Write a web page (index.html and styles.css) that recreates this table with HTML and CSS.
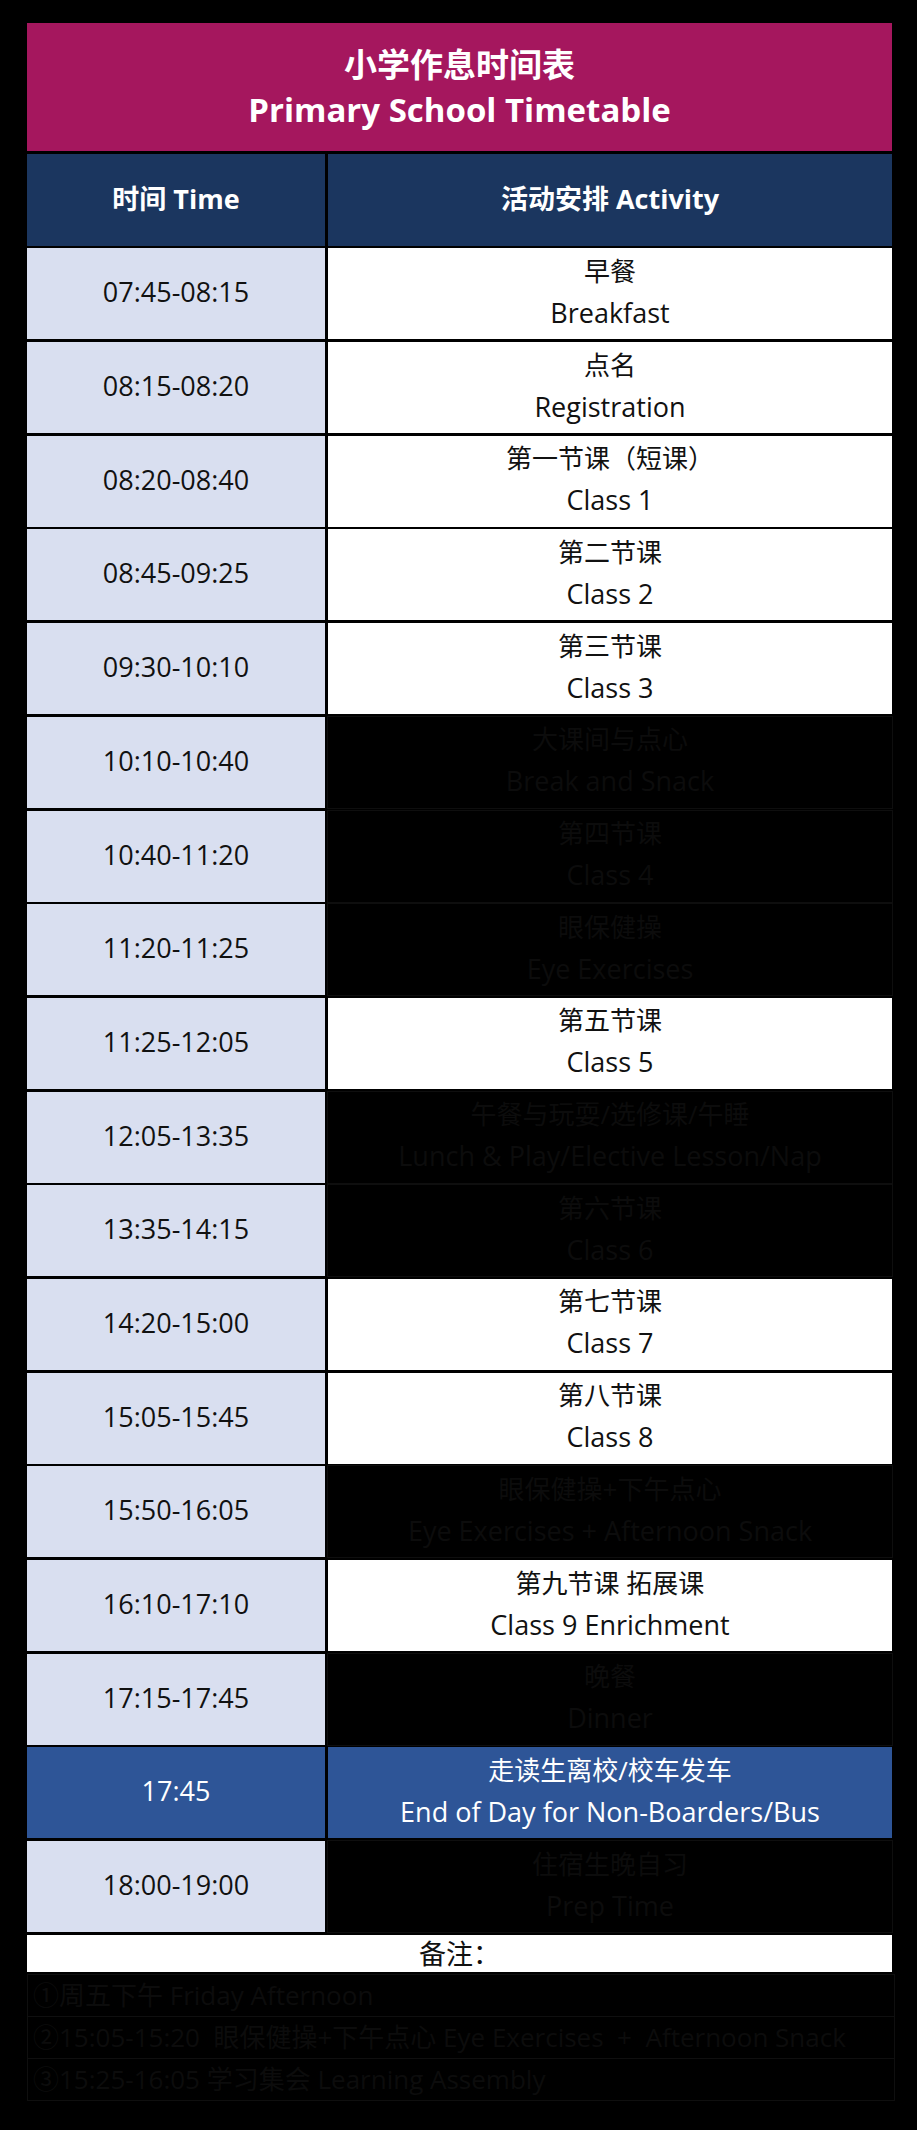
FILE: index.html
```html
<!DOCTYPE html>
<html lang="zh-CN">
<head>
<meta charset="utf-8">
<title>小学作息时间表 Primary School Timetable</title>
<link rel="stylesheet" href="styles.css">
</head>
<body>
<div class="page">
  <div class="grid">
    <div class="title">
      <div>小学作息时间表</div>
      <div>Primary School Timetable</div>
    </div>
    <div class="colhead">时间 Time</div>
    <div class="colhead">活动安排 Activity</div>

    <div class="time">07:45-08:15</div><div class="act light"><span>早餐</span><span>Breakfast</span></div>
    <div class="time">08:15-08:20</div><div class="act light"><span>点名</span><span>Registration</span></div>
    <div class="time">08:20-08:40</div><div class="act light"><span>第一节课（短课）</span><span>Class 1</span></div>
    <div class="time">08:45-09:25</div><div class="act light"><span>第二节课</span><span>Class 2</span></div>
    <div class="time">09:30-10:10</div><div class="act light"><span>第三节课</span><span>Class 3</span></div>
    <div class="time">10:10-10:40</div><div class="act dark"><span>大课间与点心</span><span>Break and Snack</span></div>
    <div class="time">10:40-11:20</div><div class="act dark"><span>第四节课</span><span>Class 4</span></div>
    <div class="time">11:20-11:25</div><div class="act dark"><span>眼保健操</span><span>Eye Exercises</span></div>
    <div class="time">11:25-12:05</div><div class="act light"><span>第五节课</span><span>Class 5</span></div>
    <div class="time">12:05-13:35</div><div class="act dark"><span>午餐与玩耍/选修课/午睡</span><span>Lunch &amp; Play/Elective Lesson/Nap</span></div>
    <div class="time">13:35-14:15</div><div class="act dark"><span>第六节课</span><span>Class 6</span></div>
    <div class="time">14:20-15:00</div><div class="act light"><span>第七节课</span><span>Class 7</span></div>
    <div class="time">15:05-15:45</div><div class="act light"><span>第八节课</span><span>Class 8</span></div>
    <div class="time">15:50-16:05</div><div class="act dark"><span>眼保健操+下午点心</span><span>Eye Exercises + Afternoon Snack</span></div>
    <div class="time">16:10-17:10</div><div class="act light"><span>第九节课 拓展课</span><span>Class 9 Enrichment</span></div>
    <div class="time">17:15-17:45</div><div class="act dark"><span>晚餐</span><span>Dinner</span></div>
    <div class="time blue">17:45</div><div class="act blue"><span>走读生离校/校车发车</span><span>End of Day for Non-Boarders/Bus</span></div>
    <div class="time">18:00-19:00</div><div class="act dark"><span>住宿生晚自习</span><span>Prep Time</span></div>

    <div class="remark">备注：</div>
  </div>
  <div class="notes">
    <div class="note">①周五下午 Friday Afternoon</div>
    <div class="note">②15:05-15:20&nbsp; 眼保健操+下午点心 Eye Exercises&nbsp; +&nbsp; Afternoon Snack</div>
    <div class="note">③15:25-16:05 学习集会 Learning Assembly</div>
  </div>
</div>
</body>
</html>
```
FILE: styles.css
```css
html, body {
  margin: 0;
  padding: 0;
  background: #000;
}
body {
  font-family: "Open Sans", "Noto Sans CJK SC", sans-serif;
  color: #111;
  width: 917px;
  height: 2130px;
  overflow: hidden;
}
.page {
  padding: 23px 25px 0 27px;
}
.grid {
  display: grid;
  grid-template-columns: 298px 564px;
  grid-auto-rows: 91px;
  grid-template-rows: 128px 92px;
  column-gap: 3px;
  row-gap: 2.7px;
  width: 865px;
}
.title {
  grid-column: 1 / 3;
  background: #a5175e;
  color: #fff;
  font-weight: 700;
  font-size: 33px;
  line-height: 45px;
  display: flex;
  flex-direction: column;
  align-items: center;
  justify-content: center;
}
.colhead {
  background: #1b365f;
  color: #fff;
  font-weight: 700;
  font-size: 27px;
  display: flex;
  align-items: center;
  justify-content: center;
  padding-bottom: 4px;
}
.time {
  background: #d9dff0;
  color: #111;
  font-size: 27px;
  display: flex;
  align-items: center;
  justify-content: center;
  padding-bottom: 4px;
}
.act {
  display: flex;
  flex-direction: column;
  align-items: center;
  justify-content: center;
  font-size: 26px;
  line-height: 41px;
  padding-bottom: 4px;
}
.act span:last-child {
  font-size: 27px;
}
.light {
  background: #fff;
  color: #111;
}
.dark {
  background: #000;
  color: #0c0c0c;
  box-shadow: 0 0 0 1px #0e0e0e;
}
.blue {
  background: #2e5597;
  color: #fff;
}
.remark {
  grid-column: 1 / 3;
  height: 37px;
  background: #fff;
  color: #111;
  font-size: 27px;
  line-height: 37px;
  text-align: center;
  align-self: start;
}
.notes {
  margin-top: -52px;
  width: 866px;
  border: 1px solid #0f0f0f;
  display: flex;
  flex-direction: column;
}
.note {
  height: 41px;
  line-height: 41px;
  padding-left: 5px;
  font-size: 26px;
  color: #0c0c0c;
  border-bottom: 1px solid #0f0f0f;
  white-space: nowrap;
}
.note:last-child {
  border-bottom: none;
}
```
